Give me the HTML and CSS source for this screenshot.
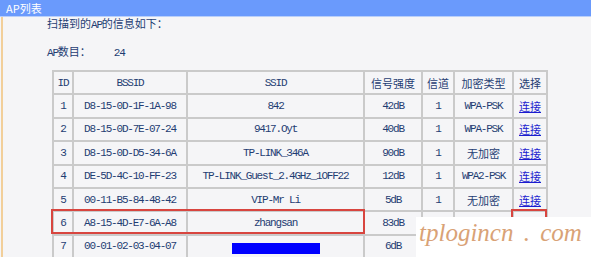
FILE: index.html
```html
<!DOCTYPE html>
<html lang="zh-CN">
<head>
    <meta charset="UTF-8">
    <meta name="viewport" content="width=device-width, initial-scale=1.0">
    <link rel="stylesheet" href="styles.css">
    <title>AP列表</title>
</head>
<body>
    <div class="title-bar">AP列表</div>
    <div class="panel">
        <p class="line first">扫描到的<span class="m">AP</span>的信息如下：</p>
        <p class="line"><span class="m">AP</span>数目：<span class="count m">24</span></p>

        <div class="table-wrap">
            <table class="ap-table">
                <colgroup>
                    <col class="c-id">
                    <col class="c-bssid">
                    <col class="c-ssid">
                    <col class="c-signal">
                    <col class="c-channel">
                    <col class="c-enc">
                    <col class="c-sel">
                </colgroup>
                <tr>
                    <td class="m">ID</td>
                    <td class="m">BSSID</td>
                    <td class="m">SSID</td>
                    <td>信号强度</td>
                    <td>信道</td>
                    <td>加密类型</td>
                    <td>选择</td>
                </tr>
                <tr>
                    <td class="m">1</td>
                    <td class="m">D8-15-0D-1F-1A-98</td>
                    <td class="m">842</td>
                    <td class="m">42dB</td>
                    <td class="m">1</td>
                    <td class="m">WPA-PSK</td>
                    <td><a href="#">连接</a></td>
                </tr>
                <tr>
                    <td class="m">2</td>
                    <td class="m">D8-15-0D-7E-07-24</td>
                    <td class="m">9417.Oyt</td>
                    <td class="m">40dB</td>
                    <td class="m">1</td>
                    <td class="m">WPA-PSK</td>
                    <td><a href="#">连接</a></td>
                </tr>
                <tr>
                    <td class="m">3</td>
                    <td class="m">D8-15-0D-D5-34-6A</td>
                    <td class="m">TP-LINK_346A</td>
                    <td class="m">90dB</td>
                    <td class="m">1</td>
                    <td>无加密</td>
                    <td><a href="#">连接</a></td>
                </tr>
                <tr>
                    <td class="m">4</td>
                    <td class="m">DE-5D-4C-10-FF-23</td>
                    <td class="m">TP-LINK_Guest_2.4GHz_1OFF22</td>
                    <td class="m">12dB</td>
                    <td class="m">1</td>
                    <td class="m">WPA2-PSK</td>
                    <td><a href="#">连接</a></td>
                </tr>
                <tr>
                    <td class="m">5</td>
                    <td class="m">00-11-B5-84-48-42</td>
                    <td class="m">VIP-Mr Li</td>
                    <td class="m">5dB</td>
                    <td class="m">1</td>
                    <td>无加密</td>
                    <td><a href="#">连接</a></td>
                </tr>
                <tr>
                    <td class="m">6</td>
                    <td class="m">A8-15-4D-E7-6A-A8</td>
                    <td class="m">zhangsan</td>
                    <td class="m">83dB</td>
                    <td></td>
                    <td></td>
                    <td></td>
                </tr>
                <tr>
                    <td class="m">7</td>
                    <td class="m">00-01-02-03-04-07</td>
                    <td><span class="masked"></span></td>
                    <td class="m">6dB</td>
                    <td></td>
                    <td></td>
                    <td></td>
                </tr>
            </table>
            <div class="mark mark-row"></div>
            <div class="mark mark-link"></div>
        </div>
    </div>
    <div class="watermark">tplogincn . com</div>
</body>
</html>
```

FILE: styles.css
```css
body {
    margin: 0;
    background-color: #f5f5f7;
    font-family: "Liberation Mono", "Noto Sans CJK SC", monospace;
    font-size: 11px;
    color: #1f3d73;
    height: 257px;
    overflow: hidden;
}

.title-bar {
    height: 16px;
    line-height: 16px;
    padding-left: 6px;
    background-color: #6a9afc;
    border-bottom: 1px solid #b9cffa;
    color: #fff;
    font-family: "Noto Sans CJK SC", sans-serif;
}

.panel {
    border-left: 2px solid #f2cf9a;
    margin-left: 1px;
    padding-left: 44px;
    height: 240px;
}

.m {
    font-family: "Liberation Mono", monospace;
    letter-spacing: -1.2px;
}

.line {
    margin: 0;
    height: 14px;
    line-height: 14px;
    padding-top: 14px;
}

.line.first {
    padding-top: 1px;
}

.count {
    margin-left: 23px;
}

.table-wrap {
    position: relative;
    margin-top: 10px;
    margin-left: 5px;
}

.ap-table {
    border-collapse: collapse;
    table-layout: fixed;
    width: 494px;
}

.ap-table td {
    border: 2px solid #cacaca;
    height: 21.4px;
    padding: 0;
    text-align: center;
    white-space: nowrap;
    overflow: hidden;
}

.ap-table td:not(.m) {
    font-family: "Noto Sans CJK SC", sans-serif;
}

.c-id { width: 20px; }
.c-bssid { width: 114px; }
.c-ssid { width: 177px; }
.c-signal { width: 58px; }
.c-channel { width: 32px; }
.c-enc { width: 59px; }
.c-sel { width: 34px; }

.ap-table a {
    color: #1c1ccf;
    text-decoration: underline;
}

.masked {
    display: inline-block;
    width: 88px;
    height: 11px;
    background-color: #0000ff;
    vertical-align: middle;
}

.mark {
    position: absolute;
    border: 2px solid #d8453f;
    box-sizing: border-box;
}

.mark-row {
    left: -1px;
    top: 139px;
    width: 314px;
    height: 25px;
}

.mark-link {
    left: 459px;
    top: 139px;
    width: 36px;
    height: 25px;
}

.watermark {
    position: absolute;
    left: 416px;
    top: 217px;
    width: 175px;
    height: 40px;
    background-color: #fff;
    color: #d9a276;
    font-family: "Liberation Serif", serif;
    font-style: italic;
    font-size: 25px;
    line-height: 32px;
    word-spacing: 4px;
    padding-left: 3px;
    box-sizing: border-box;
    white-space: nowrap;
    overflow: hidden;
}
```
